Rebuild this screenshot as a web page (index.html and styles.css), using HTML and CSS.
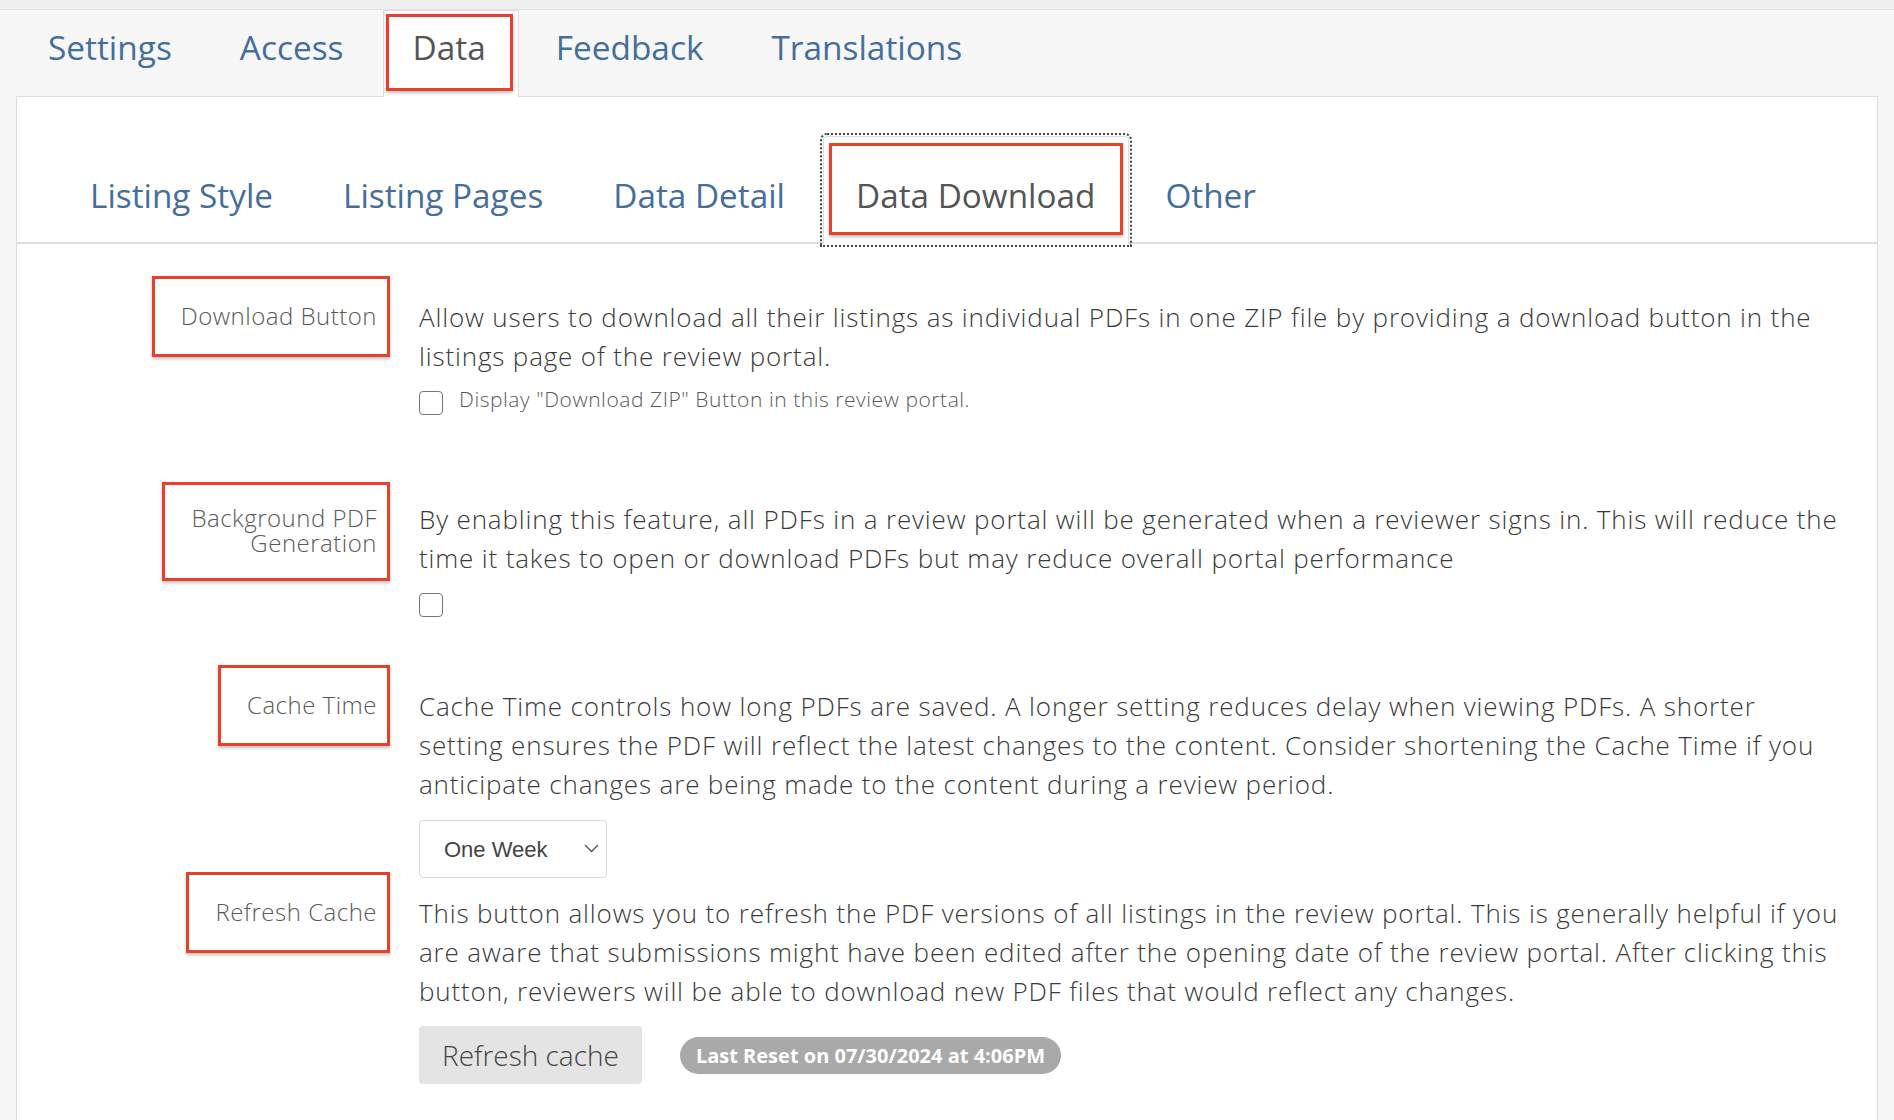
FILE: index.html
```html
<!DOCTYPE html>
<html lang="en">
<head>
    <meta charset="UTF-8">
    <meta name="viewport" content="width=device-width, initial-scale=1.0">
    <title>Review Portal - Data Download</title>
    <link rel="stylesheet" href="styles.css">
</head>
<body>

<div class="topbar"></div>

<div class="page">
    <ul class="tabs">
        <li><a href="#">Settings</a></li>
        <li><a href="#">Access</a></li>
        <li class="active"><a href="#"><span class="mark">Data</span></a></li>
        <li><a href="#">Feedback</a></li>
        <li><a href="#">Translations</a></li>
    </ul>

    <div class="panel">
        <ul class="subtabs">
            <li><a href="#">Listing Style</a></li>
            <li><a href="#">Listing Pages</a></li>
            <li><a href="#">Data Detail</a></li>
            <li class="active"><a href="#"><span class="mark">Data Download</span></a></li>
            <li><a href="#">Other</a></li>
        </ul>

        <div class="form">
            <div class="row row-download">
                <div class="label"><span class="mark">Download Button</span></div>
                <div class="body">
                    <p>Allow users to download all their listings as individual PDFs in one ZIP file by providing a download button in the listings page of the review portal.</p>
                    <label class="check">
                        <input type="checkbox">
                        <span>Display "Download ZIP" Button in this review portal.</span>
                    </label>
                </div>
            </div>

            <div class="row row-background">
                <div class="label"><span class="mark">Background PDF<br>Generation</span></div>
                <div class="body">
                    <p>By enabling this feature, all PDFs in a review portal will be generated when a reviewer signs in. This will reduce the time it takes to open or download PDFs but may reduce overall portal performance</p>
                    <label class="check">
                        <input type="checkbox">
                    </label>
                </div>
            </div>

            <div class="row">
                <div class="label"><span class="mark">Cache Time</span></div>
                <div class="body">
                    <p>Cache Time controls how long PDFs are saved. A longer setting reduces delay when viewing PDFs. A shorter setting ensures the PDF will reflect the latest changes to the content. Consider shortening the Cache Time if you anticipate changes are being made to the content during a review period.</p>
                    <div class="select">
                        <select>
                            <option>One Week</option>
                            <option>One Day</option>
                            <option>One Hour</option>
                        </select>
                        <svg class="chevron" width="15" height="9" viewBox="0 0 15 9">
                            <path d="M1 1l6.5 6.5L14 1" fill="none" stroke="#555" stroke-width="1.4"/>
                        </svg>
                    </div>
                </div>
            </div>

            <div class="row">
                <div class="label"><span class="mark">Refresh Cache</span></div>
                <div class="body">
                    <p>This button allows you to refresh the PDF versions of all listings in the review portal. This is generally helpful if you are aware that submissions might have been edited after the opening date of the review portal. After clicking this button, reviewers will be able to download new PDF files that would reflect any changes.</p>
                    <div class="actions">
                        <button class="btn">Refresh cache</button>
                        <span class="badge">Last Reset on 07/30/2024 at 4:06PM</span>
                    </div>
                </div>
            </div>
        </div>
    </div>
</div>

</body>
</html>
```

FILE: styles.css
```css
body {
    margin: 0;
    background: #f7f7f7;
    font-family: "Open Sans", sans-serif;
    color: #333;
}
.topbar {
    height: 9px;
    background: #efefef;
    border-bottom: 1px solid #e2e2e2;
}
.page {
    padding: 0 16px;
}

/* main tabs */
.tabs {
    display: flex;
    list-style: none;
    margin: 0 0 0 -2px;
    padding: 0;
}
.tabs a {
    display: block;
    padding: 15px 34px 26px;
    font-size: 33.4px;
    line-height: 45px;
    color: #446e9b;
    text-decoration: none;
}
.tabs .active {
    margin: 0 3px 0 5px;
    position: relative;
    z-index: 1;
}
.tabs .active a {
    padding: 3px 5px 6px 2px;
    background: #fff;
    border: 1px solid #ddd;
    border-bottom: none;
    margin-bottom: -1px;
    color: #555;
}
.tabs .active .mark {
    display: block;
    padding: 8px 24px 18px;
}

.mark {
    border: 3px solid #e5412d;
    box-shadow: 0 2px 3px rgba(0, 0, 0, 0.25);
}

.panel {
    background: #fff;
    border: 1px solid #ddd;
    min-height: 1100px;
}

/* sub tabs */
.subtabs {
    display: flex;
    list-style: none;
    margin: 0;
    padding: 39px 0 0 38px;
    border-bottom: 2px solid #ddd;
}
.subtabs a {
    display: block;
    padding: 37px 35px 24px;
    font-size: 33.3px;
    line-height: 45px;
    color: #446e9b;
    text-decoration: none;
}
.subtabs .active {
    margin: 0 1px 0 3px;
}
.subtabs .active a {
    padding: 6px 5px 9px;
    background: #fff;
    border: 1px solid #ddd;
    border-bottom: none;
    border-radius: 4px 4px 0 0;
    margin-bottom: -2px;
    color: #555;
    outline: 2px dotted #444;
    outline-offset: 1px;
}
.subtabs .active .mark {
    display: block;
    padding: 27px 25px 14px 24px;
}

/* form rows */
.form {
    padding: 53px 30px 40px 0;
}
.row {
    display: grid;
    grid-template-columns: 373px 1fr;
    column-gap: 29px;
    align-items: start;
    margin-bottom: 15px;
}
.row-download {
    margin-bottom: 84px;
}
.row-background {
    margin-bottom: 69px;
}
.label {
    text-align: right;
}
.label .mark {
    display: inline-block;
    margin-top: -21px;
    padding: 24px 10px 26px 26px;
    font-size: 24px;
    line-height: 25px;
    font-weight: 300;
    letter-spacing: 0.5px;
    color: #5a5a5a;
}
.row-background .label .mark {
    margin-top: -17px;
    padding-top: 20px;
    padding-bottom: 23px;
}
.body p {
    margin: 0;
    padding-top: 1px;
    font-size: 26px;
    line-height: 39px;
    font-weight: 300;
    letter-spacing: 0.85px;
    color: #3a3a3a;
}
.check {
    display: flex;
    align-items: flex-start;
    gap: 16px;
    margin-top: 15px;
    font-size: 21px;
    line-height: 16px;
    font-weight: 300;
    letter-spacing: 0.55px;
    color: #5a5a5a;
}
.check input {
    appearance: none;
    width: 24px;
    height: 24px;
    margin: 0;
    border: 1.5px solid #777;
    border-radius: 4px;
    background: #fff;
}
.select {
    position: relative;
    display: inline-block;
    margin-top: 16px;
}
.select select {
    appearance: none;
    display: block;
    width: 188px;
    height: 58px;
    padding: 0 24px;
    border: 1px solid #dcdcdc;
    border-radius: 4px;
    background: #fff;
    font-family: "Liberation Sans", Arial, sans-serif;
    font-size: 22px;
    color: #444;
}
.chevron {
    position: absolute;
    right: 8px;
    top: 24px;
}
.actions {
    display: flex;
    align-items: center;
    margin-top: 15px;
}
.btn {
    height: 58px;
    padding: 0 23px;
    border: none;
    border-radius: 4px;
    background: #e4e4e4;
    font-family: "Open Sans", sans-serif;
    font-size: 28px;
    font-weight: 300;
    color: #444;
    cursor: pointer;
}
.badge {
    margin-left: 38px;
    padding: 0 16px;
    height: 37px;
    line-height: 37px;
    border-radius: 19px;
    background: #a9a9a9;
    color: #fff;
    font-size: 20px;
    font-weight: 700;
}
```
